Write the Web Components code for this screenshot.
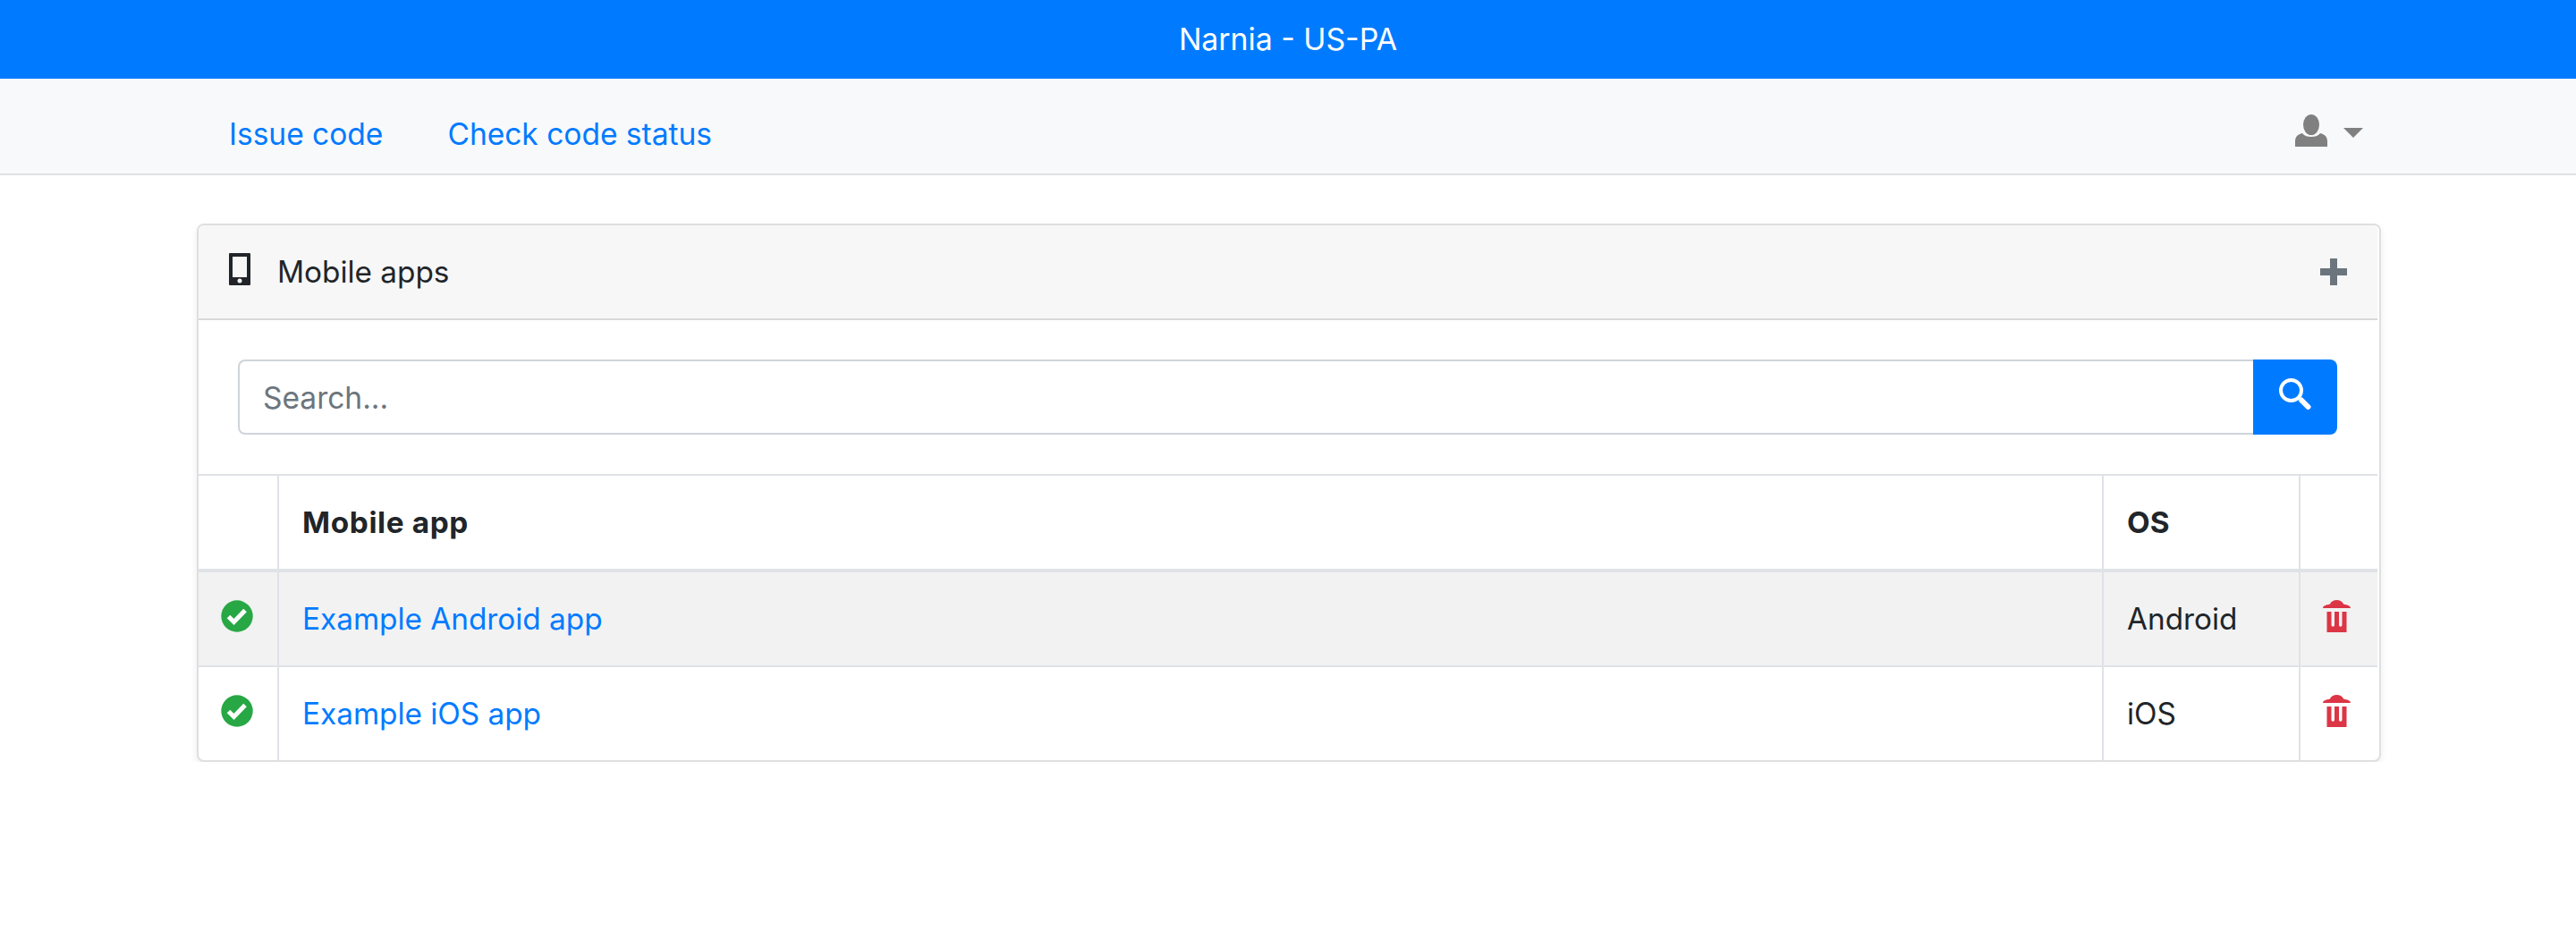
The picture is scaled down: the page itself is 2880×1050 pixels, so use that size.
<!DOCTYPE html>
<html><head><meta charset="utf-8"><title>Narnia</title>
<style>
html,body{margin:0;padding:0;background:#fff}
body{font:33.3px/48px Inter,"Liberation Sans",sans-serif;color:#212529;-webkit-font-smoothing:antialiased}
</style></head><body>
<brand-bar>Narnia - US-PA</brand-bar>
<nav-bar>
  <nav-link>Issue code</nav-link>
  <nav-link>Check code status</nav-link>
  <user-menu slot="end"></user-menu>
</nav-bar>
<page-main>
  <app-card>
    <svg slot="icon" width="24" height="36" viewBox="0 0 24 36"><path fill="#212529" fill-rule="evenodd" d="M1 0h22a1 1 0 0 1 1 1v34a1 1 0 0 1-1 1H1a1 1 0 0 1-1-1V1a1 1 0 0 1 1-1zM4 4v23h16V4zM12 28.500a2.500 2.500 0 1 0 0 5 2.500 2.500 0 0 0 0-5z"/></svg>
    <span slot="title">Mobile apps</span>
    <svg slot="action" width="30" height="30" viewBox="0 0 30 30"><path fill="#6c757d" d="M11 0h8v11h11v8H19v11h-8V19H0v-8h11z"/></svg>
    <search-box></search-box>
    <table-row kind="head"><b slot="name" style="letter-spacing:.65px">Mobile app</b><b slot="os">OS</b></table-row>
    <table-row kind="stripe" status delete><a-link slot="name">Example Android app</a-link><span slot="os">Android</span></table-row>
    <table-row status delete><a-link slot="name">Example iOS app</a-link><span slot="os">iOS</span></table-row>
  </app-card>
</page-main>
<script>
function def(name, html, setup){
  customElements.define(name, class extends HTMLElement{
    constructor(){super();this.attachShadow({mode:'open'}).innerHTML=html;}
    connectedCallback(){ if(setup) setup.call(this); }
  });
}
def('brand-bar',`<style>:host{display:flex;justify-content:center;align-items:center;height:88px;background:#007bff;color:#fff;font-size:33.8px}</style><slot></slot>`);
def('nav-bar',`<style>:host{display:flex;align-items:center;height:108px;box-sizing:border-box;background:#f8f9fa;border-bottom:2px solid #dfe1e4;padding:18px 218px 0 220px}
.l{display:flex;flex:1}</style><div class="l"><slot></slot></div><slot name="end"></slot>`);
def('nav-link',`<style>:host{display:block;padding:0 36px;margin-right:0;color:#007bff;font-size:33.5px}</style><slot></slot>`);
def('user-menu',`<style>:host{display:flex;align-items:center;gap:18px;padding:0 20px 8px 0}svg{display:block}.c{margin-top:5px}</style>
<svg width="36" height="36" viewBox="0 0 36 36"><ellipse cx="18" cy="11.500" rx="9" ry="11.500" fill="#808080"/><path fill="#808080" d="M0 36v-6c0-5 3-8 8-9 2.500 3 6 4 10 4s7.500-1 10-4c5 1 8 4 8 9v6z"/></svg>
<svg class="c" width="22" height="11" viewBox="0 0 22 11"><path fill="#808080" d="M0 0h22L11 11z"/></svg>`);
def('page-main',`<style>:host{display:block;padding:54px 218px 0 220px}</style><slot></slot>`);
def('app-card',`<style>:host{display:block;background:#fff;border:2px solid #dfdfdf;border-radius:8px;box-shadow:0 4px 8px rgba(0,0,0,.075)}
.wrap{margin-right:2px}
header{display:flex;align-items:center;height:104px;background:#f7f7f7;border-bottom:2px solid #d8d8d8;padding:0 34px;border-radius:6px 6px 0 0}
.i{display:flex;margin-right:30px;margin-top:-7px}.a{margin-left:auto;display:flex}.t{flex:1}
</style><div class="wrap"><header><span class="i"><slot name="icon"></slot></span><span class="t"><slot name="title"></slot></span><span class="a"><slot name="action"></slot></span></header><slot></slot></div>`);
def('search-box',`<style>:host{display:flex;padding:44px 45px 44px 44px;height:84px}
input{flex:1;box-sizing:border-box;height:84px;min-width:0;border:2px solid #ced4da;border-right:0;border-radius:8px 0 0 8px;padding:2px 26px 0;font:inherit;font-size:33.500px;color:#495057;outline:0;background:#fff}
input::placeholder{color:#6c757d;opacity:1}
.b{width:94px;height:84px;flex:none;background:#007bff;border-radius:0 8px 8px 0;display:flex;align-items:center;justify-content:center}
svg{margin-top:-7px}
</style><input placeholder="Search..."><div class="b"><svg width="36" height="36" viewBox="0 0 36 36"><circle cx="13.500" cy="13.500" r="11.500" fill="none" stroke="#fff" stroke-width="4"/><path d="M25 24.500l7.500 7.500" stroke="#fff" stroke-width="6" stroke-linecap="round"/></svg></div>`);
def('a-link',`<style>:host{color:#007bff}</style><slot></slot>`);
const trash=`<svg width="31" height="36" viewBox="0 0 31 36"><path fill="#dc3545" d="M0 9C0 6.500 3 5.500 8 4.500 9 1.500 12 0 15.500 0S22 1.500 23 4.500C28 5.500 31 6.500 31 9z"/><path fill="#dc3545" fill-rule="evenodd" d="M4.500 13h22v23h-22zM9.500 13v15a1.750 1.750 0 0 0 3.500 0V13zm8.500 0v15a1.750 1.750 0 0 0 3.500 0V13z"/></svg>`;
const check=`<svg width="36" height="36" viewBox="0 0 36 36"><circle cx="18" cy="18" r="17.700" fill="#28a745"/><path d="M8.500 18.500l6 6L27 11.500" fill="none" stroke="#fff" stroke-width="5"/></svg>`;
def('table-row',`<style>:host{display:grid;grid-template-columns:90px 2040px 220px 86px;border-top:2px solid #dfe2e6;height:104px}
:host([kind=head]){border-bottom:4px solid #dfe2e6}
:host([kind=stripe]){background:#f2f2f2;border-top:0}
.c{box-sizing:border-box;border-right:2px solid #dfe2e6;display:flex;align-items:center;padding:0 26px}
.c:last-child{border-right:0}
.s{padding:0 0 7px 25px}.d{padding:0 0 7px 25px}
</style><div class="c s" id="s"></div><div class="c"><slot name="name"></slot></div><div class="c"><slot name="os"></slot></div><div class="c d" id="d"></div>`,function(){
  if(this.hasAttribute('status'))this.shadowRoot.getElementById('s').innerHTML=check;
  if(this.hasAttribute('delete'))this.shadowRoot.getElementById('d').innerHTML=trash;
});
</script></body></html>
